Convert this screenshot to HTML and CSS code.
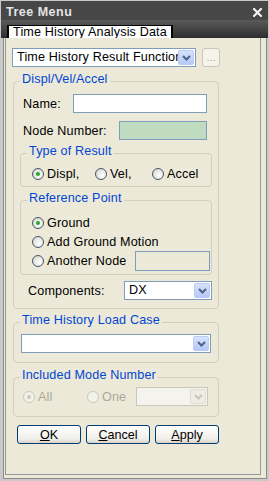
FILE: index.html
```html
<!DOCTYPE html>
<html lang="en">
<head>
    <meta charset="UTF-8">
    <title>Tree Menu</title>
    <link rel="stylesheet" href="styles.css">
</head>
<body>
<div class="window">

    <!-- Title bar -->
    <div class="titlebar">
        <span class="title">Tree Menu</span>
        <svg class="close" width="9" height="9" viewBox="0 0 9 9">
            <path d="M1 1 L8 8 M8 1 L1 8" stroke="#f2f2f2" stroke-width="2.2" stroke-linecap="square"/>
        </svg>
    </div>

    <!-- Tab strip -->
    <div class="tabstrip">
        <div class="tab">Time History Analysis Data</div>
    </div>

    <div class="client">
        <div class="panel">

            <div class="func-row">
                <div class="combo combo-func">
                    <span class="combo-text">Time History Result Function</span>
                    <span class="combo-btn"><svg width="9" height="6" viewBox="0 0 9 6"><path d="M1 1 L4.5 4.5 L8 1" fill="none" stroke="#4d6185" stroke-width="2"/></svg></span>
                </div>
                <button class="btn-more" disabled>...</button>
            </div>

            <!-- Displ/Vel/Accel -->
            <fieldset class="group group-displ">
                <legend>Displ/Vel/Accel</legend>
                <div class="field-row">
                    <label class="lbl lbl-name">Name:</label>
                    <input type="text" class="txt txt-name">
                </div>
                <div class="field-row row-node">
                    <label class="lbl lbl-node">Node Number:</label>
                    <input type="text" class="txt txt-node">
                </div>

                <fieldset class="group inner group-type">
                    <legend>Type of Result</legend>
                    <div class="type-grid">
                        <label class="radio on"><span class="dot"></span>Displ,</label>
                        <label class="radio"><span class="dot"></span>Vel,</label>
                        <label class="radio"><span class="dot"></span>Accel</label>
                    </div>
                </fieldset>

                <fieldset class="group inner group-ref">
                    <legend>Reference Point</legend>
                    <label class="radio ref-row on"><span class="dot"></span>Ground</label>
                    <label class="radio ref-row"><span class="dot"></span>Add Ground Motion</label>
                    <div class="ref-row another">
                        <label class="radio another-lbl"><span class="dot"></span>Another Node</label>
                        <input type="text" class="txt txt-another">
                    </div>
                </fieldset>

                <div class="field-row row-comp">
                    <label class="lbl lbl-comp">Components:</label>
                    <div class="combo combo-comp">
                        <span class="combo-text">DX</span>
                        <span class="combo-btn"><svg width="9" height="6" viewBox="0 0 9 6"><path d="M1 1 L4.5 4.5 L8 1" fill="none" stroke="#4d6185" stroke-width="2"/></svg></span>
                    </div>
                </div>
            </fieldset>

            <!-- Load case -->
            <fieldset class="group group-load">
                <legend>Time History Load Case</legend>
                <div class="combo combo-load">
                    <span class="combo-text"></span>
                    <span class="combo-btn"><svg width="9" height="6" viewBox="0 0 9 6"><path d="M1 1 L4.5 4.5 L8 1" fill="none" stroke="#4d6185" stroke-width="2"/></svg></span>
                </div>
            </fieldset>

            <!-- Mode number (disabled) -->
            <fieldset class="group group-mode">
                <legend>Included Mode Number</legend>
                <div class="mode-grid">
                    <label class="radio off on"><span class="dot"></span>All</label>
                    <label class="radio off"><span class="dot"></span>One</label>
                    <div class="combo combo-off">
                        <span class="combo-text"></span>
                        <span class="combo-btn"><svg width="9" height="6" viewBox="0 0 9 6"><path d="M1 1 L4.5 4.5 L8 1" fill="none" stroke="#c9c7ba" stroke-width="2"/></svg></span>
                    </div>
                </div>
            </fieldset>

            <div class="buttons">
                <button class="btn"><u>O</u>K</button>
                <button class="btn"><u>C</u>ancel</button>
                <button class="btn"><u>A</u>pply</button>
            </div>

        </div>
    </div>
</div>
</body>
</html>
```

FILE: styles.css
```css
body {
    margin: 0;
    background-color: #c9c9c9;
    font-family: "Liberation Sans", Arial, sans-serif;
    font-size: 12.6px;
    letter-spacing: 0.15px;
    color: #000;
}
.window {
    width: 269px;
    height: 481px;
    box-sizing: border-box;
    padding-top: 1px;
    display: flex;
    flex-direction: column;
}
.titlebar {
    margin: 0 1px;
    height: 19px;
    box-sizing: border-box;
    padding: 3px 0 0 5px;
    background-color: #474747;
    display: flex;
    justify-content: space-between;
    align-items: flex-start;
}
.title {
    font-weight: bold;
    font-size: 12.5px;
    letter-spacing: 0.5px;
    line-height: 16px;
    color: #e4e4e4;
}
.close {
    margin: 4px 6px 0 0;
}
.tabstrip {
    margin: 0 1px;
    height: 18px;
    padding-left: 6px;
    background: linear-gradient(#5a5a5a, #2e2e2e);
    display: flex;
    align-items: flex-end;
}
.tab {
    background-color: white;
    border: 1px solid #000;
    border-left-width: 2px;
    border-right-width: 2px;
    border-bottom: none;
    height: 12px;
    line-height: 12px;
    padding: 0 4px;
    white-space: nowrap;
}
.client {
    flex: 1;
    margin: 0 2px 2px 3px;
    border: 1px solid #8c8c8c;
    border-top: none;
    background-color: #ece9d8;
    padding: 0 5px 3px 1px;
    display: flex;
}
.panel {
    flex: 1;
    border: 1px solid #919b9c;
    border-top: none;
    padding: 10px 0 0 6px;
}

/* combo boxes */
.func-row {
    display: flex;
    gap: 6px;
}
.combo {
    display: flex;
    box-sizing: border-box;
    height: 19px;
    border: 1px solid #7f9db9;
    background-color: white;
    padding: 1px;
}
.combo-text {
    flex: 1;
    overflow: hidden;
    white-space: nowrap;
    padding-left: 3px;
    line-height: 15px;
}
.combo-btn {
    width: 16px;
    height: 15px;
    box-sizing: border-box;
    border: 1px solid #b9cbf3;
    border-radius: 2px;
    background: linear-gradient(#d6e2fd, #b5c9f7);
    display: flex;
    align-items: center;
    justify-content: center;
}
.combo-func {
    width: 184px;
}
.btn-more {
    width: 18px;
    height: 19px;
    box-sizing: border-box;
    border: 1px solid #c9c7ba;
    border-radius: 3px;
    background-color: #f5f4ea;
    color: #aca899;
    font: inherit;
    font-size: 11px;
    padding: 0;
    line-height: 17px;
}

/* group boxes */
.group {
    margin: 0;
    border: 1px solid #d0d0bf;
    border-radius: 4px;
    padding: 0 6px;
    min-width: 0;
}
.group legend {
    padding: 0 2px 4px;
    line-height: 14px;
    color: #0046d5;
}
.group-displ {
    width: 206px;
    box-sizing: border-box;
    margin: 5px 0 0 1px;
    padding-top: 4px;
    padding-bottom: 8px;
}
.field-row {
    display: flex;
    align-items: center;
    height: 19px;
}
.row-node {
    margin-top: 8px;
}
.lbl-name {
    margin-left: 3px;
    width: 50px;
}
.lbl-node {
    margin-left: 3px;
    width: 96px;
}
.txt {
    box-sizing: border-box;
    height: 19px;
    border: 1px solid #7f9db9;
    background-color: white;
    margin: 0;
    padding: 0;
    font: inherit;
}
.txt-name {
    width: 134px;
}
.txt-node {
    width: 88px;
    background-color: #c0dcc0;
}
.inner {
    margin-top: 4px;
}
.group-type {
    padding-top: 5px;
    padding-bottom: 5px;
}
.type-grid {
    display: grid;
    grid-template-columns: 63px 57px auto;
    height: 14px;
    margin-left: 5px;
}

/* radio buttons */
.radio {
    display: flex;
    align-items: center;
    gap: 3px;
    white-space: nowrap;
}
.dot {
    width: 12px;
    height: 12px;
    box-sizing: border-box;
    border-radius: 50%;
    border: 1px solid #44556b;
    background: radial-gradient(circle at 65% 65%, #ffffff, #d3d1c8);
    display: flex;
    align-items: center;
    justify-content: center;
}
.radio.on .dot::after {
    content: "";
    width: 4px;
    height: 4px;
    border-radius: 50%;
    background-color: #25a825;
}
.radio.off {
    color: #aca899;
}
.radio.off .dot {
    border-color: #cac8bb;
    background: #f2f1ea;
}
.radio.off.on .dot::after {
    background-color: #cac8bb;
}

.group-ref {
    padding: 4px 1px 3px 6px;
}
.ref-row {
    height: 19px;
    margin-left: 5px;
}
.ref-row.another {
    height: 20px;
    display: flex;
    align-items: center;
}
.another-lbl {
    width: 103px;
}
.txt-another {
    width: 75px;
    height: 20px;
    background-color: #ece9d8;
}
.row-comp {
    margin-top: 6px;
}
.lbl-comp {
    margin-left: 8px;
    width: 96px;
}
.combo-comp {
    width: 88px;
}

.group-load {
    width: 206px;
    box-sizing: border-box;
    margin: 4px 0 0 1px;
    padding-top: 3px;
    padding-bottom: 9px;
}
.combo-load {
    width: 190px;
    margin-left: 1px;
}

.group-mode {
    width: 206px;
    box-sizing: border-box;
    margin: 5px 0 0 1px;
    padding-top: 1px;
    padding-bottom: 10px;
}
.mode-grid {
    display: grid;
    grid-template-columns: 64px 49px 72px;
    align-items: center;
    height: 19px;
    margin-left: 3px;
}
.combo-off {
    border-color: #c9c7ba;
    background-color: #f4f3ee;
}
.combo-off .combo-btn {
    border-color: #dedcd3;
    background: #eeede5;
}

/* dialog buttons */
.buttons {
    display: flex;
    gap: 5px;
    margin: 8px 0 0 5px;
}
.btn {
    width: 64px;
    height: 19px;
    box-sizing: border-box;
    border: 1px solid #003c74;
    border-radius: 3px;
    background: linear-gradient(#ffffff, #f0efea 75%, #d8d3c8);
    font: inherit;
    padding: 0;
    line-height: 16px;
    color: #000;
}
```
